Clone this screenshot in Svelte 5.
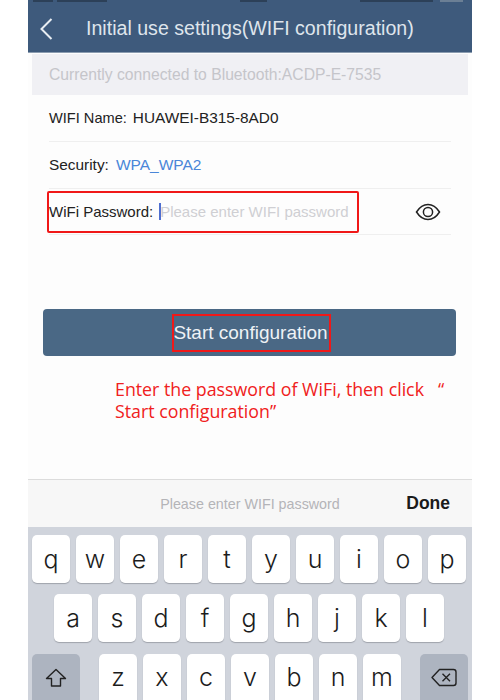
<script>
  const rows = [
    { cls: 'r1', keys: ['q','w','e','r','t','y','u','i','o','p'] },
    { cls: 'r2', keys: ['a','s','d','f','g','h','j','k','l'] },
  ];
  const row3 = ['z','x','c','v','b','n','m'];
</script>

<div class="page">
  <div class="phone">
    <header class="nav">
      <div class="status" aria-hidden="true">
        <span class="blot b1"></span><span class="blot b2"></span><span class="blot b3"></span><span class="blot b4"></span><span class="blot b5"></span>
      </div>
      <div class="navrow">
        <svg class="back" width="14" height="24" viewBox="0 0 14 24"><path d="M12.5 2 L2.5 12 L12.5 22" fill="none" stroke="#e8edf2" stroke-width="2"/></svg>
        <span class="title">Initial use settings(WIFI configuration)</span>
      </div>
    </header>

    <div class="bt">Currently connected to Bluetooth:ACDP-E-7535</div>

    <div class="rows">
      <div class="row h47"><span class="lbl">WIFI Name:</span><span class="val">HUAWEI-B315-8AD0</span></div>
      <div class="row h47"><span class="lbl sec">Security:</span><span class="val blue">WPA_WPA2</span></div>
      <div class="row h46 pw">
        <span class="lbl pwl">WiFi Password:</span>
        <span class="caret"></span>
        <span class="ph">Please enter WIFI password</span>
        <svg class="eye" width="26" height="18" viewBox="0 0 26 18">
          <path d="M1.5 9 C5 3.5 9 1.5 13 1.5 S21 3.5 24.5 9 C21 14.5 17 16.5 13 16.5 S5 14.5 1.5 9 Z" fill="none" stroke="#222" stroke-width="1.5"/>
          <circle cx="13" cy="9" r="4.6" fill="none" stroke="#222" stroke-width="1.5"/>
        </svg>
        <span class="redbox pwbox"></span>
      </div>
    </div>

    <div class="btnwrap">
      <div class="btn">
        <span class="btntext">Start configuration<span class="redbox btnbox"></span></span>
      </div>
    </div>

    <p class="note">Enter the password of WiFi, then click<span class="quote">“</span><br/>Start configuration”</p>

    <div class="spacer"></div>

    <div class="bar">
      <span class="barph">Please enter WIFI password</span>
      <span class="done">Done</span>
    </div>

    <div class="kb">
      {#each rows as r}
        <div class="kr {r.cls}">
          {#each r.keys as k}<div class="key">{k}</div>{/each}
        </div>
      {/each}
      <div class="kr r3">
        <div class="key fn">
          <svg width="22" height="20" viewBox="0 0 22 20"><path d="M11 1.5 L20.5 10.5 H15.5 V18 H6.5 V10.5 H1.5 Z" fill="none" stroke="#222" stroke-width="1.4" stroke-linejoin="round"/></svg>
        </div>
        <div class="letters">
          {#each row3 as k}<div class="key">{k}</div>{/each}
        </div>
        <div class="key fn">
          <svg width="26" height="19" viewBox="0 0 26 19"><path d="M8.5 1.5 H22.5 A2.5 2.5 0 0 1 25 4 V15 A2.5 2.5 0 0 1 22.5 17.5 H8.5 L1 9.5 Z" fill="none" stroke="#222" stroke-width="1.4" stroke-linejoin="round"/><path d="M11.5 5.8 L19 13.2 M19 5.8 L11.5 13.2" stroke="#222" stroke-width="1.4"/></svg>
        </div>
      </div>
    </div>
  </div>
</div>

<style>
  :global(body) { margin: 0; background: #fff; }
  .page { width: 500px; height: 700px; background: #fff; overflow: hidden; display: flex; justify-content: center; font-family: "Liberation Sans", Arial, sans-serif; }
  .phone { width: 444px; height: 700px; background: #fdfdfd; display: flex; flex-direction: column; overflow: hidden; }

  .nav { height: 53px; background: #3e5a7c; border-bottom: 1px solid #8b9cb0; box-sizing: border-box; flex: none; position: relative; }
  .status { height: 5px; display: flex; padding-left: 5px; }
  .blot { display: block; height: 2px; background: #2c4058; }
  .b1 { width: 20px; margin-right: 4px; }
  .b2 { width: 50px; margin-right: 133px; }
  .b3 { width: 27px; margin-right: 93px; }
  .b4 { width: 73px; margin-right: 7px; }
  .b5 { width: 23px; background: #6b7f95; }
  .navrow { display: flex; align-items: center; height: 47px; padding-left: 11px; }
  .back { flex: none; }
  .title { margin-left: 33px; font-size: 19.6px; color: #dfe5ec; white-space: nowrap; }

  .bt { flex: none; margin: 1px 4px 0; height: 41px; background: #f0f0f4; color: #c5c5ca; font-size: 15.7px; display: flex; align-items: center; padding-left: 17px; box-sizing: border-box; }

  .rows { flex: none; margin: 0 21px 0 21px; }
  .row { display: flex; align-items: center; border-bottom: 1px solid #efefef; box-sizing: border-box; position: relative; }
  .h46 { height: 46px; }
  .h47 { height: 47px; }
  .lbl { font-size: 14.6px; color: #222; white-space: nowrap; }
  .sec { font-size: 15.4px; }
  .pwl { font-size: 15px; }
  .val { font-size: 15.4px; color: #222; margin-left: 6px; white-space: nowrap; }
  .blue { color: #4a86d8; margin-left: 7px; font-size: 15.5px; }
  .caret { width: 2px; height: 17px; background: #4f6fd0; margin-left: 6px; flex: none; }
  .ph { color: #cfcfd3; font-size: 15px; margin-left: -1px; white-space: nowrap; }
  .eye { position: absolute; left: 366px; top: 14px; }
  .redbox { position: absolute; border: 2px solid #f01818; box-sizing: border-box; pointer-events: none; }
  .pwbox { left: -2px; top: 2px; width: 312px; height: 42px; border-radius: 2px; }

  .btnwrap { flex: none; padding: 74px 16px 0 15px; }
  .btn { height: 47px; background: #4a6885; border-radius: 4px; display: flex; align-items: center; justify-content: center; padding-top: 1px; box-sizing: border-box; }
  .btntext { position: relative; left: 1px; color: #eef2f6; font-size: 19px; white-space: nowrap; }
  .btnbox { left: -1px; right: -3px; top: -8px; bottom: -8px; }

  .note { flex: none; margin: 22px 0 0 87px; color: #f02020; font-size: 17.8px; line-height: 22px; font-family: "Open Sans", "Noto Sans", sans-serif; white-space: nowrap; }
  .quote { margin-left: 14px; }

  .spacer { flex: 1; }

  .bar { flex: none; height: 48px; background: #f7f7f7; border-top: 1px solid #dcdcdc; box-sizing: border-box; display: flex; align-items: center; position: relative; }
  .barph { width: 444px; text-align: center; color: #b4b4b8; font-size: 14.3px; }
  .done { position: absolute; right: 22px; top: 13px; font-size: 17.5px; font-weight: bold; color: #1a1a1a; }

  .kb { flex: none; height: 173px; background: #d0d4dc; padding: 8px 4px 0 4px; box-sizing: border-box; display: flex; flex-direction: column; gap: 11px; }
  .kr { display: flex; gap: 6px; height: 48px; }
  .r2 { padding: 0 21px 0 22px; }
  .r3 { justify-content: space-between; height: 60px; margin-top: 1px; }
  .letters { display: flex; gap: 6px; }
  .key { width: 38px; height: 48px; flex: none; background: #fff; border-radius: 5px; box-shadow: 0 1px 1px #9fa3ab; display: flex; align-items: center; justify-content: center; font-size: 25px; color: #1c1c1c; font-family: "Inter", "Liberation Sans", sans-serif; font-weight: 300; }
  .r3 .key { height: 60px; align-items: flex-start; padding-top: 8px; box-sizing: border-box; }
  .r3 .key.fn { width: 48px; background: #adb4c0; box-shadow: none; padding-top: 14px; }
</style>
